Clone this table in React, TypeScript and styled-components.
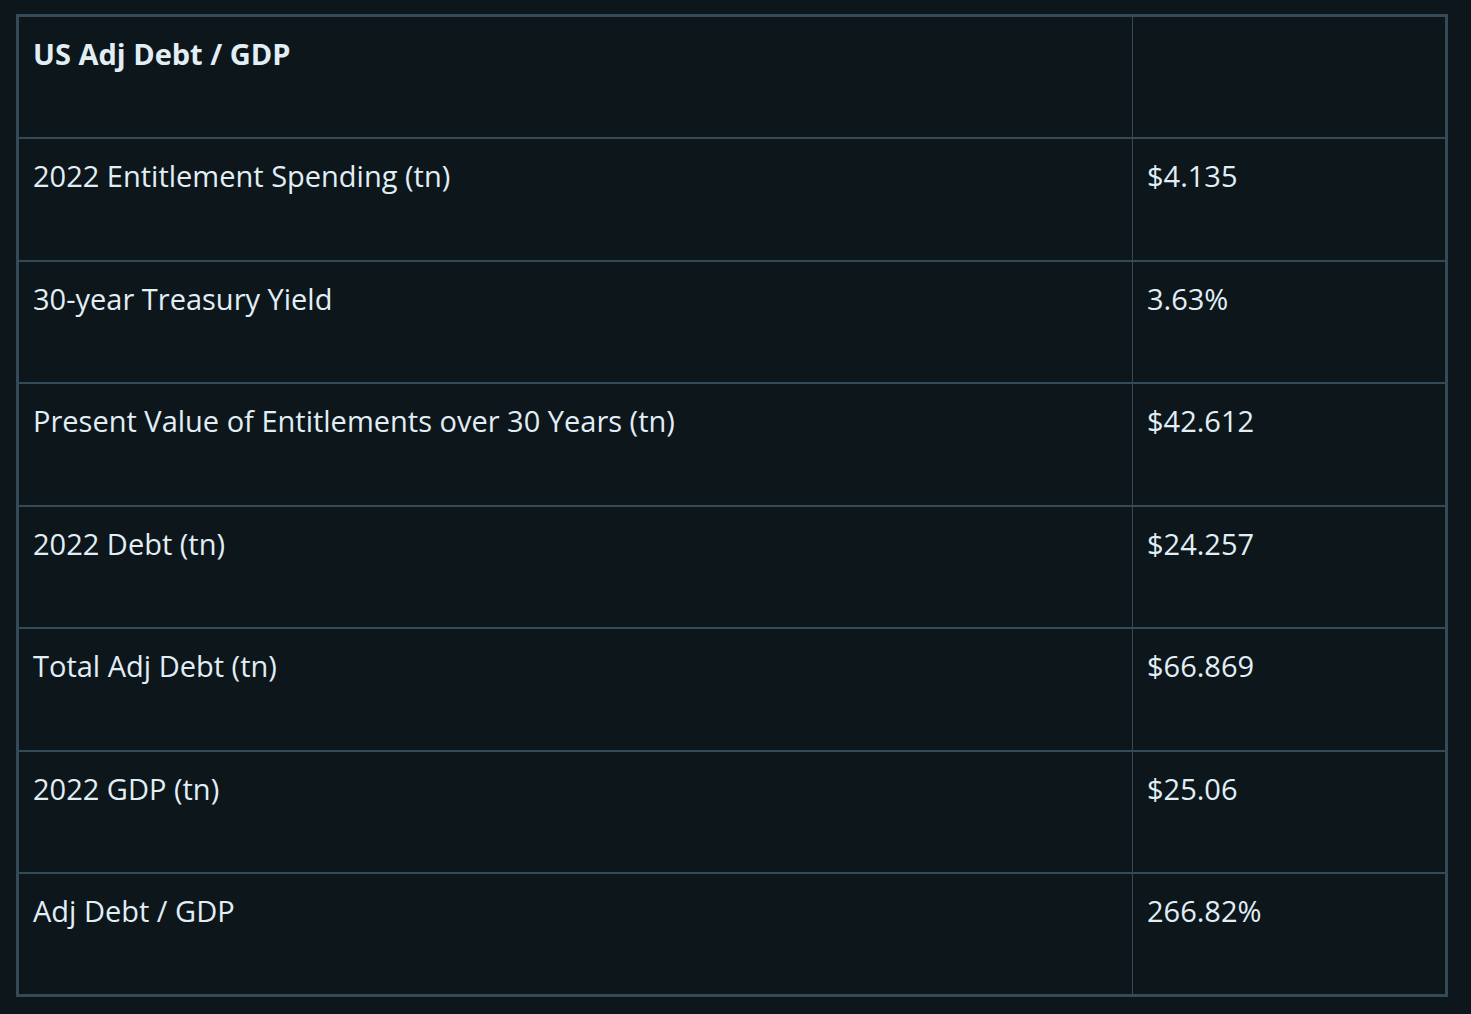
import React from "react";
import styled, { createGlobalStyle } from "styled-components";

const Global = createGlobalStyle`
  html, body {
    margin: 0;
    padding: 0;
    background: #0c161b;
  }
  body {
    font-family: "Open Sans", "Noto Sans", sans-serif;
    color: #e2eef5;
  }
`;

const Page = styled.div`
  padding: 14px 23px 18px 16px;
  background: #0c161b;
  min-height: 100vh;
  box-sizing: border-box;
`;

const Table = styled.table`
  width: 1432px;
  border-collapse: collapse;
  border: 3px solid #344a57;
  table-layout: fixed;
`;

const Row = styled.tr`
  border-bottom: 2px solid #344a57;
`;

const Cell = styled.td<{ $bold?: boolean; $value?: boolean }>`
  height: 122.5px;
  box-sizing: border-box;
  vertical-align: top;
  padding: 16px 14px;
  font-size: 29px;
  line-height: 42px;
  font-weight: ${(p) => (p.$bold ? 700 : 400)};
  border-right: ${(p) => (p.$value ? "none" : "1px solid #344a57")};
  color: #e2eef5;
`;

const rows: [string, string][] = [
  ["2022 Entitlement Spending (tn)", "$4.135"],
  ["30-year Treasury Yield", "3.63%"],
  ["Present Value of Entitlements over 30 Years (tn)", "$42.612"],
  ["2022 Debt (tn)", "$24.257"],
  ["Total Adj Debt (tn)", "$66.869"],
  ["2022 GDP (tn)", "$25.06"],
  ["Adj Debt / GDP", "266.82%"],
];

export default function App() {
  return (
    <>
      <Global />
      <Page>
        <Table>
          <colgroup>
            <col style={{ width: 1115 }} />
            <col />
          </colgroup>
          <tbody>
            <Row>
              <Cell $bold>US Adj Debt / GDP</Cell>
              <Cell $value></Cell>
            </Row>
            {rows.map(([label, value]) => (
              <Row key={label}>
                <Cell>{label}</Cell>
                <Cell $value>{value}</Cell>
              </Row>
            ))}
          </tbody>
        </Table>
      </Page>
    </>
  );
}
